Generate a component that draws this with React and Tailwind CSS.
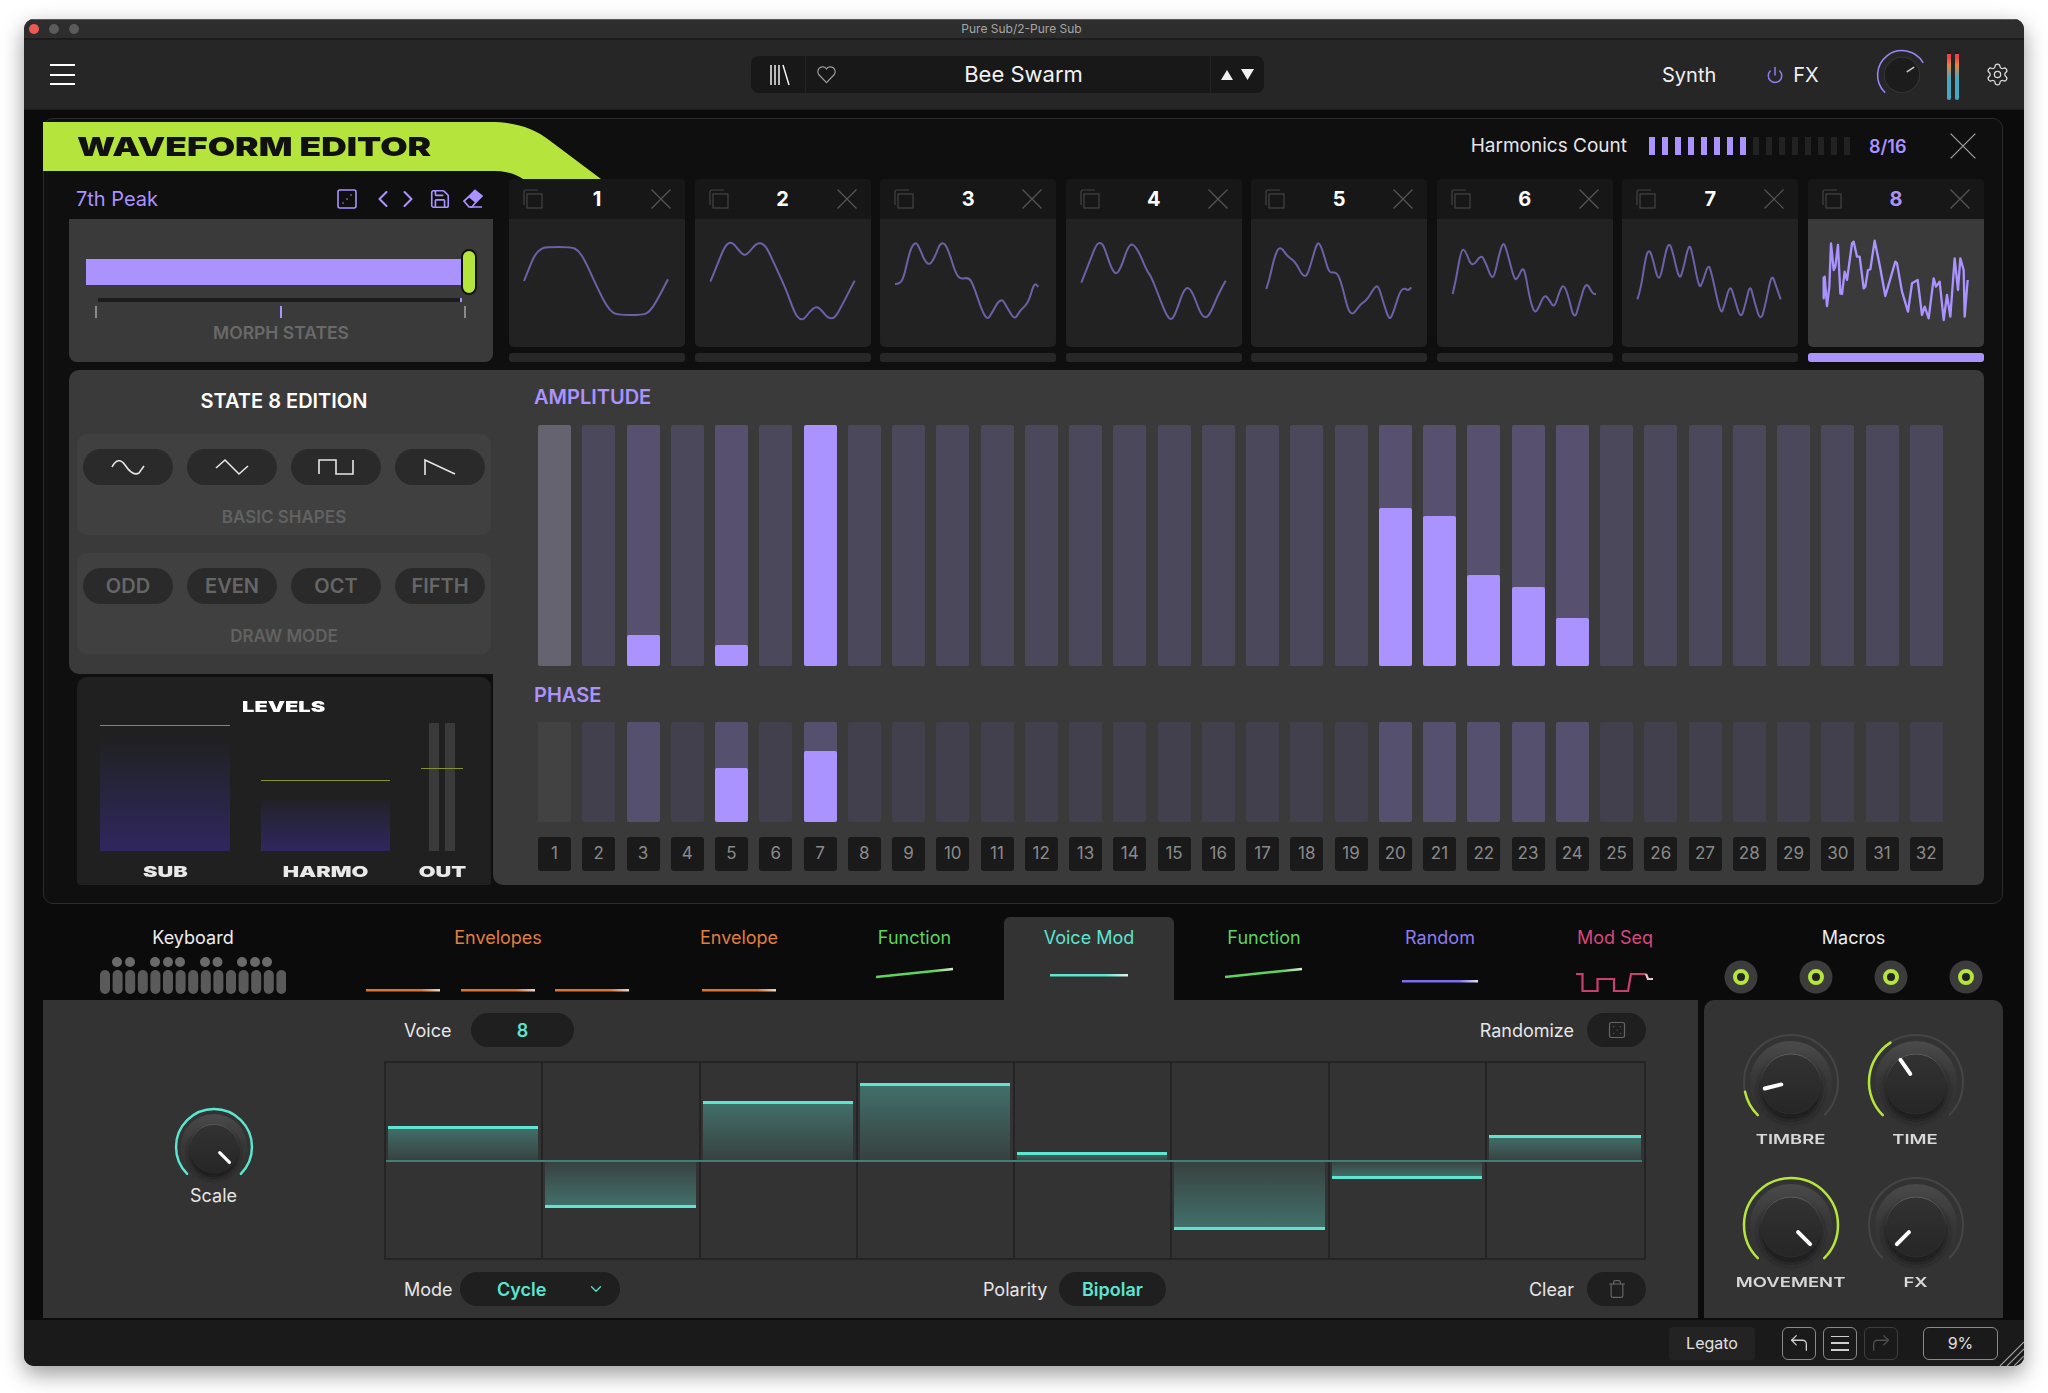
import React from "react";
import {
  ChevronLeft,
  ChevronRight,
  ChevronDown,
  CornerUpLeft,
  CornerUpRight,
  Dice3,
  Dice5,
  Power,
  Save,
  Settings,
  Trash,
} from "lucide-react";

const slotWaves = [
  { origin: 13, pts: [58,333,75,290,90,255,110,235,125,231,200,231,220,240,240,270,265,325,295,388,315,420,335,435,415,435,435,425,455,395,490,328] },
  { origin: 566, pts: [612,335,635,280,650,240,665,218,680,218,700,245,715,257,730,245,750,220,770,220,785,240,810,295,840,360,865,430,880,448,893,448,910,425,930,408,945,420,965,445,985,445,1005,410,1045,332] },
  { origin: 1125, pts: [1170,342,1185,342,1197,320,1215,240,1230,217,1240,225,1260,275,1275,285,1290,260,1305,220,1320,220,1335,255,1350,305,1365,328,1392,322,1405,345,1430,420,1447,450,1460,430,1488,380,1510,420,1530,450,1545,420,1570,400,1587,338,1600,350] },
  { origin: -1, pts: [45,338,70,275,90,222,105,217,115,235,135,295,150,315,165,290,185,230,200,220,220,250,240,300,255,320,280,385,300,435,315,452,330,425,350,365,365,350,380,370,400,425,415,445,430,435,455,375,478,332] },
  { origin: 557, pts: [603,357,612,330,625,270,638,235,650,235,665,258,690,275,710,315,725,320,740,270,755,218,765,222,780,270,792,310,815,305,830,345,848,420,860,433,870,425,885,403,905,390,930,348,940,350,955,400,972,453,985,425,1005,360,1020,355,1028,362,1038,352] },
  { origin: 1113, pts: [1160,372,1170,330,1185,240,1197,238,1218,295,1245,252,1260,280,1275,322,1285,320,1300,250,1312,215,1322,240,1345,330,1355,325,1370,292,1378,310,1392,390,1405,428,1415,420,1435,372,1450,390,1465,415,1480,365,1492,343,1505,370,1525,453,1540,400,1560,333,1580,372,1590,372] },
  { origin: 424, pts: [470,388,480,360,495,260,505,238,515,260,530,325,540,322,555,245,565,218,575,240,595,328,605,310,625,218,635,250,655,355,665,340,683,280,693,310,720,435,730,410,748,343,760,380,780,450,795,400,808,342,820,390,840,457,855,400,873,310,885,345,900,388] },
  { origin: 983, jagged: true, pts: [1030,320,1030,385,1033,320,1040,408,1047,350,1052,220,1060,300,1065,290,1073,225,1080,370,1085,372,1093,305,1100,330,1115,220,1120,215,1130,260,1138,260,1150,355,1155,350,1163,300,1170,298,1183,212,1198,285,1215,378,1245,275,1250,280,1265,365,1283,425,1295,340,1312,330,1325,435,1333,410,1345,445,1360,325,1367,350,1378,335,1390,450,1400,375,1410,440,1423,265,1433,360,1440,265,1450,300,1453,440,1462,330] },
];

const ampFill = { 3: 31, 5: 21, 7: 241, 20: 158, 21: 150, 22: 91, 23: 79, 24: 48 };
const phaseFill = { 5: 54, 7: 71 };
const activeBars = [3, 5, 7, 20, 21, 22, 23, 24];
const bars = Array.from({ length: 32 }, (_, i) => i + 1);
const voiceSteps = [34, -45, 59, 77, 8, -67, -16, 25];

const wavePath = (wave) => {
  const p = [];
  for (let i = 0; i < wave.pts.length; i += 2) {
    p.push([wave.pts[i] - wave.origin, wave.pts[i + 1] - 147]);
  }
  if (wave.jagged) return "M" + p.map((q) => q.join(" ")).join("L");
  let d = `M${p[0][0]} ${p[0][1]}`;
  for (let i = 1; i < p.length - 1; i++) {
    const mx = (p[i][0] + p[i + 1][0]) / 2;
    const my = (p[i][1] + p[i + 1][1]) / 2;
    d += `Q${p[i][0]} ${p[i][1]} ${mx} ${my}`;
  }
  const last = p[p.length - 1];
  return d + `L${last[0]} ${last[1]}`;
};

const polar = (r, deg) => {
  const rad = ((deg - 90) * Math.PI) / 180;
  return [r * Math.cos(rad), r * Math.sin(rad)];
};

const arc = (r, from, to) => {
  const [x1, y1] = polar(r, from);
  const [x2, y2] = polar(r, to);
  const large = to - from > 180 ? 1 : 0;
  return `M${x1} ${y1}A${r} ${r} 0 ${large} 1 ${x2} ${y2}`;
};

const Knob = ({ size = 104, angle, to, color = "#b5e53c", dark = false, arcWidth = 2.5 }) => {
  const [x1, y1] = polar(dark ? 12 : 10, angle);
  const [x2, y2] = polar(27, angle);
  return (
    <svg width={size} height={size} viewBox="-52 -52 104 104" className="shrink-0">
      <defs>
        <linearGradient id="skirt" x1="0" y1="0" x2="0" y2="1">
          <stop offset="0" stopColor="#4a4a4a" />
          <stop offset="0.45" stopColor="#383838" />
          <stop offset="1" stopColor="#333333" stopOpacity="0" />
        </linearGradient>
        <linearGradient id="cap" x1="0" y1="0" x2="0" y2="1">
          <stop offset="0" stopColor="#323232" />
          <stop offset="1" stopColor="#262626" />
        </linearGradient>
        <linearGradient id="capEdge" x1="0" y1="0" x2="0" y2="1">
          <stop offset="0" stopColor="#5e5e5e" />
          <stop offset="0.5" stopColor="#2c2c2c" />
        </linearGradient>
        <filter id="blur" x="-30%" y="-30%" width="160%" height="160%">
          <feGaussianBlur stdDeviation="3" />
        </filter>
      </defs>
      {!dark && <path d={arc(47, -135, 135)} fill="none" stroke="#454545" strokeWidth="2" />}
      {!dark && <circle r="41" fill="url(#skirt)" />}
      {!dark && <circle cy="8" r="31" fill="#1b1b1b" filter="url(#blur)" />}
      {dark ? (
        <circle r="34" fill="#1c1c1c" stroke="#353535" strokeWidth="2" />
      ) : (
        <circle cy="2" r="30" fill="url(#cap)" stroke="url(#capEdge)" strokeWidth="1" />
      )}
      {to !== undefined && (
        <path d={arc(47, -135, to)} fill="none" stroke={color} strokeWidth={arcWidth} strokeLinecap="round" />
      )}
      <line x1={x1} y1={y1} x2={x2} y2={y2} stroke={dark ? "#c8c8c8" : "#ffffff"} strokeWidth={dark ? 3 : 4} strokeLinecap="round" />
    </svg>
  );
};

const CopyIcon = () => (
  <svg width="20" height="20" viewBox="0 0 20 20" fill="none" stroke="#444" strokeWidth="1.2" className="shrink-0">
    <path d="M1 16V3a2 2 0 0 1 2-2h12" />
    <rect x="4" y="5" width="15" height="14" />
  </svg>
);

const CrossIcon = ({ size = 20, color = "#555" }) => (
  <svg width={size} height={size} viewBox="0 0 20 20" fill="none" stroke={color} strokeWidth={size > 20 ? 1 : 1.2} className="shrink-0">
    <path d="M0.5 0.5 19.5 19.5M19.5 0.5 0.5 19.5" />
  </svg>
);

const Shape = ({ d }) => (
  <svg width="36" height="20" viewBox="0 0 36 20" fill="none" stroke="#e6e6e6" strokeWidth="1.6">
    <path d={d} />
  </svg>
);

const LineIcon = ({ width, children }) => (
  <svg width={width} height="51" viewBox={`0 0 ${width} 51`} fill="none">
    <defs>
      <linearGradient id="fadeOrange" x1="0" y1="0" x2="1" y2="0">
        <stop offset="0.75" stopColor="#dd7436" />
        <stop offset="1" stopColor="#e6d8cc" />
      </linearGradient>
      <linearGradient id="fadeGreen" gradientUnits="userSpaceOnUse" x1="0" y1="0" x2="78" y2="0">
        <stop offset="0.75" stopColor="#5ed45e" />
        <stop offset="1" stopColor="#e4f0e0" />
      </linearGradient>
      <linearGradient id="fadeTeal" gradientUnits="userSpaceOnUse" x1="0" y1="0" x2="78" y2="0">
        <stop offset="0.7" stopColor="#5ce5d0" />
        <stop offset="1" stopColor="#dff3ef" />
      </linearGradient>
      <linearGradient id="fadePurple" gradientUnits="userSpaceOnUse" x1="0" y1="0" x2="76" y2="0">
        <stop offset="0.75" stopColor="#7c6ee8" />
        <stop offset="1" stopColor="#e5e0f5" />
      </linearGradient>
    </defs>
    {children}
  </svg>
);

const EnvLine = ({ x = 0, w = 74 }) => <rect x={x} y="40" width={w} height="2.5" fill="url(#fadeOrange)" />;

const ModTab = ({ label, color, className = "", children }) => (
  <div className={`flex flex-col items-center pt-[8px] ${className}`}>
    <div className={`h-[24px] text-[18px] leading-[26px] ${color}`}>{label}</div>
    {children}
  </div>
);

const HeavyLabel = ({ children, className = "" }) => (
  <span className={`inline-block font-black text-[15px] leading-[16px] text-[#e8e8e8] scale-x-[1.45] ${className}`}>{children}</span>
);

const GroupBox = ({ label, children }) => (
  <div className="ml-[8px] mr-[2px] h-[101px] rounded-[10px] bg-[#404040] px-[6px] pt-[15px] flex flex-col items-center">
    <div className="grid grid-cols-4 gap-x-[14px] w-full">{children}</div>
    <div className="mt-[22px] text-[17px] leading-[20px] font-semibold text-[#626262]">{label}</div>
  </div>
);

const PillBtn = ({ children }) => (
  <div className="h-[36px] rounded-full bg-[#2a2a2a] flex items-center justify-center text-[20px] font-semibold text-[#666]">{children}</div>
);

const MacroKnob = ({ label, angle, to }) => (
  <div className="h-[143px] flex flex-col items-center">
    <Knob angle={angle} to={to} />
    <div className="h-[12px] -mt-[1px] text-[13px] leading-[12px] font-semibold text-[#d8d8d8] scale-x-[1.42]">{label}</div>
  </div>
);

const FootBtn = ({ children, dim }) => (
  <div className={`w-[34px] h-[33px] rounded-[6px] border flex items-center justify-center ${dim ? "border-[#3e3e3e] text-[#4f4f4f]" : "border-[#8a8a8a] text-[#cfcfcf]"}`}>
    {children}
  </div>
);

export default function App() {
  return (
    <div className="w-[2048px] h-[1393px] bg-white pt-[19px] pl-[24px] overflow-hidden [font-family:Inter,sans-serif]">
      <div className="w-[2000px] h-[1347px] rounded-[10px] overflow-hidden flex flex-col bg-[#0b0b0b] shadow-[0_8px_22px_rgba(0,0,0,0.4)] text-[#ededed] relative">
        {/* title bar */}
        <div className="h-[21px] shrink-0 bg-[#2d2d2d] border-t border-[#5a5a5a] border-b-[2px] border-b-[#1c1c1c] flex items-center relative">
          <div className="flex gap-[10px] pl-[5px]">
            <div className="w-[10px] h-[10px] rounded-full bg-[#ee5a52]" />
            <div className="w-[10px] h-[10px] rounded-full bg-[#5b5b5b]" />
            <div className="w-[10px] h-[10px] rounded-full bg-[#5b5b5b]" />
          </div>
          <div className="flex-1 text-center text-[12px] text-[#a5a5a5] pr-[60px]">Pure Sub/2-Pure Sub</div>
        </div>

        {/* header */}
        <div className="h-[70px] shrink-0 bg-[#262626] border-b border-[#1c1c1c] flex items-center pl-[26px]">
          <div className="w-[25px] h-[21px] flex flex-col justify-between">
            <div className="h-[2px] bg-white" />
            <div className="h-[2px] bg-white" />
            <div className="h-[2px] bg-white" />
          </div>
          <div className="ml-[676px] w-[513px] h-[37px] rounded-[8px] bg-[#181818] flex items-center">
            <div className="w-[55px] h-full border-r border-[#222] flex items-center justify-center pl-[4px]">
              <svg width="22" height="22" viewBox="0 0 22 22" fill="none" stroke="#f0f0f0" strokeWidth="1.5">
                <path d="M2 1v20M6 1v20M10 1v20M14 1l6 20" />
              </svg>
            </div>
            <svg width="21" height="19" viewBox="0 0 24 22" fill="none" stroke="#9a9a9a" strokeWidth="1.4" className="ml-[10px]">
              <path d="M12 20.5 3 11a5.5 5.5 0 0 1 9-6.5A5.5 5.5 0 0 1 21 11z" />
            </svg>
            <div className="flex-1 text-center text-[22px] leading-[39px] text-[#f2f2f2]">Bee Swarm</div>
            <div className="w-[54px] h-full border-l border-[#222] flex items-center justify-center gap-[8px]">
              <svg width="12" height="10" viewBox="0 0 12 10" fill="#f0f0f0"><path d="M6 0 12 10H0z" /></svg>
              <svg width="13" height="11" viewBox="0 0 12 10" fill="#f0f0f0"><path d="M0 0H12L6 10z" /></svg>
            </div>
          </div>
          <div className="ml-[398px] text-[20px] text-[#efefef]">Synth</div>
          <Power size={18} strokeWidth={2} className="ml-[50px] text-[#8d7cf0]" />
          <div className="ml-[9px] text-[20px] text-[#efefef]">FX</div>
          <div className="ml-[56px] w-[54px] flex justify-center">
            <Knob size={54} dark angle={57} to={59} color="#9a86f5" arcWidth={3} />
          </div>
          <div className="ml-[18px] flex gap-[4px]">
            <div className="w-[4px] h-[50px] rounded-full bg-[linear-gradient(to_bottom,#1f1f2a_0%,#1f1f2a_8%,#ef4444_9%,#ef4444_15%,#e0863c_30%,#47a8c4_58%,#47a8c4_100%)]" />
            <div className="w-[4px] h-[50px] rounded-full bg-[linear-gradient(to_bottom,#1f1f2a_0%,#1f1f2a_8%,#ef4444_9%,#ef4444_15%,#e0863c_30%,#47a8c4_58%,#47a8c4_100%)]" />
          </div>
          <Settings size={25} strokeWidth={1.2} className="ml-[26px] text-[#dcdcdc]" />
        </div>

        {/* body */}
        <div className="flex-1 flex flex-col">
          {/* waveform editor */}
          <div className="relative ml-[19px] mt-[8px] w-[1960px] h-[786px] rounded-[10px] border border-[#2c2c2c] bg-[#0f0f0f] pl-[25px] pr-[18px]">
            <div className="absolute left-[-1px] top-[3px]">
              <svg width="560" height="58" viewBox="0 0 560 58" className="block">
                <path d="M0 0H447C470 0 490 5 506 18L558 57H480C470 50 460 49 447 49H0Z" fill="#b5e53c" />
              </svg>
              <div className="absolute left-[34px] top-[11px] text-[26px] leading-[28px] font-black text-[#111] whitespace-nowrap origin-left scale-x-[1.36]">WAVEFORM EDITOR</div>
            </div>

            <div className="h-[60px] flex items-center justify-end pb-[6px] pr-[8px]">
              <div className="text-[19px] text-[#e6e6e6]">Harmonics Count</div>
              <div className="ml-[22px] flex gap-[7px]">
                {Array.from({ length: 16 }, (_, i) => (
                  <div key={i} className={`w-[6px] h-[18px] ${i < 8 ? "bg-[#aa92ff]" : "bg-[#222222]"}`} />
                ))}
              </div>
              <div className="ml-[19px] w-[42px] text-[18px] font-semibold text-[#aa92ff]">8/16</div>
              <div className="ml-[39px]"><CrossIcon size={26} color="#9a9a9a" /></div>
            </div>

            {/* morph + slots */}
            <div className="flex h-[183px]">
              <div className="w-[424px] shrink-0 flex flex-col">
                <div className="h-[40px] flex items-center pl-[7px] text-[#aa92ff]">
                  <div className="text-[20px]">7th Peak</div>
                  <Dice3 size={24} strokeWidth={1.6} className="ml-[177px]" />
                  <ChevronLeft size={28} strokeWidth={1.8} className="ml-[10px]" />
                  <ChevronRight size={28} strokeWidth={1.8} className="ml-[-3px]" />
                  <Save size={22} strokeWidth={1.8} className="ml-[7px]" />
                  <svg width="21" height="20" viewBox="0 0 21 20" className="ml-[11px]" fill="none" stroke="#aa92ff" strokeWidth="1.7">
                    <path d="M8 18H20" />
                    <path d="M13 1.5 20 7l-6 6-7-5.500z" fill="#aa92ff" />
                    <path d="M7 7.500 2 12l5 6h3l4-5" />
                  </svg>
                </div>
                <div className="relative h-[143px] rounded-b-[8px] bg-[#3a3a3a]">
                  <div className="pt-[30px] pl-[17px] flex items-center">
                    <div className="w-[375px] h-[26px] bg-[#aa92ff]" />
                    <div className="w-[16px] h-[46px] rounded-full bg-[#b5e53c] border-[2px] border-[#111]" />
                  </div>
                  <div className="ml-[29px] mt-[3px] w-[364px] h-[4px] bg-[#1c1c1c] flex justify-end">
                    <div className="w-[2px] h-full bg-[#aa92ff]" />
                  </div>
                  <div className="ml-[26px] mt-[4px] w-[371px] flex justify-between">
                    <div className="w-[2px] h-[12px] bg-[#8a8a8a]" />
                    <div className="w-[2px] h-[12px] bg-[#aa92ff]" />
                    <div className="w-[2px] h-[12px] bg-[#8a8a8a]" />
                  </div>
                  <div className="mt-[4px] text-center text-[17.5px] leading-[22px] font-semibold text-[#696969]">MORPH STATES</div>
                </div>
              </div>
              <div className="ml-[16px] flex-1 grid grid-cols-8 gap-x-[9.4px]">
                {slotWaves.map((wave, i) => {
                  const active = i === 7;
                  return (
                    <div key={i} className="flex flex-col">
                      <div className="h-[40px] rounded-t-[4px] bg-[#171717] flex items-center justify-between px-[14px]">
                        <CopyIcon />
                        <div className={`text-[20px] font-bold ${active ? "text-[#aa92ff]" : "text-white"}`}>{i + 1}</div>
                        <CrossIcon />
                      </div>
                      <div className={`h-[128px] rounded-b-[5px] ${active ? "bg-[#3a3a3a]" : "bg-[#222222]"}`}>
                        <svg width="176" height="128" viewBox="0 0 528 384" fill="none" className="block">
                          <path d={wavePath(wave)} stroke={active ? "#aa92ff" : "#6c60a6"} strokeWidth={active ? 7 : 6} strokeLinejoin="round" />
                        </svg>
                      </div>
                      <div className={`mt-[6px] h-[9px] rounded-[3px] ${active ? "bg-[#aa92ff]" : "bg-[#272727]"}`} />
                    </div>
                  );
                })}
              </div>
            </div>

            {/* state editor */}
            <div className="mt-[8px] flex h-[515px]">
              <div className="w-[424px] shrink-0 flex flex-col">
                <div className="h-[304px] bg-[#3a3a3a] rounded-tl-[10px] rounded-bl-[10px]">
                  <div className="h-[64px] pt-[19px] pl-[6px] text-center text-[20px] leading-[24px] font-semibold text-white">STATE 8 EDITION</div>
                  <GroupBox label="BASIC SHAPES">
                    <PillBtn><Shape d="M2 10C6 2 11 2 15 8S24 19 29 16L34 9" /></PillBtn>
                    <PillBtn><Shape d="M2 11 11 3 25 17 34 9" /></PillBtn>
                    <PillBtn><Shape d="M1 17V3H18V17H35V3" /></PillBtn>
                    <PillBtn><Shape d="M3 18V3L33 17" /></PillBtn>
                  </GroupBox>
                  <div className="h-[18px]" />
                  <GroupBox label="DRAW MODE">
                    <PillBtn>ODD</PillBtn>
                    <PillBtn>EVEN</PillBtn>
                    <PillBtn>OCT</PillBtn>
                    <PillBtn>FIFTH</PillBtn>
                  </GroupBox>
                </div>
                <div className="ml-[8px] mt-[3px] w-[414px] h-[208px] rounded-t-[10px] rounded-b-[4px] bg-[#202020]">
                  <div className="h-[46px] pt-[21px] text-center leading-[16px]"><HeavyLabel className="text-white">LEVELS</HeavyLabel></div>
                  <div className="flex pl-[23px] gap-[31px]">
                    <div className="w-[130px] h-[128px] relative flex flex-col justify-end">
                      <div className="absolute top-[2px] left-0 right-0 h-[1px] bg-[#84922f]" />
                      <div className="h-[116px] bg-gradient-to-b from-[#202020] to-[#30265f]" />
                    </div>
                    <div className="w-[129px] h-[128px] relative flex flex-col justify-end">
                      <div className="absolute top-[57px] left-0 right-0 h-[1px] bg-[#84922f]" />
                      <div className="h-[51px] bg-gradient-to-b from-[#222128] to-[#30265f]" />
                    </div>
                    <div className="w-[42px] h-[128px] relative flex justify-center gap-[6px]">
                      <div className="w-[10px] bg-[#3a3a3a]" />
                      <div className="w-[10px] bg-[#3a3a3a]" />
                      <div className="absolute top-[45px] left-0 right-0 h-[1px] bg-[#84922f]" />
                    </div>
                  </div>
                  <div className="flex pl-[23px] gap-[31px] mt-[12px] leading-[16px]">
                    <div className="w-[130px] text-center"><HeavyLabel>SUB</HeavyLabel></div>
                    <div className="w-[129px] text-center"><HeavyLabel>HARMO</HeavyLabel></div>
                    <div className="w-[42px] text-center"><HeavyLabel>OUT</HeavyLabel></div>
                  </div>
                </div>
              </div>

              <div className="flex-1 h-full bg-[#3a3a3a] rounded-r-[8px] rounded-bl-[10px] pl-[45px]">
                <div className="pt-[15px] -ml-[4px] text-[20px] leading-[24px] font-semibold text-[#aa92ff]">AMPLITUDE</div>
                <div className="mt-[16px] grid grid-cols-[repeat(32,33px)] gap-x-[11.25px] h-[241px]">
                  {bars.map((n) => {
                    const bg = n === 1 ? "bg-[#65636f]" : activeBars.includes(n) ? "bg-[#57506f]" : "bg-[#4c485c]";
                    return (
                      <div key={n} className={`relative rounded-[2px] ${bg}`}>
                        {ampFill[n] && <div className="absolute bottom-0 inset-x-0 rounded-[2px] bg-[#aa92ff]" style={{ height: ampFill[n] }} />}
                      </div>
                    );
                  })}
                </div>
                <div className="mt-[17px] -ml-[4px] text-[20px] leading-[24px] font-semibold text-[#aa92ff]">PHASE</div>
                <div className="mt-[15px] grid grid-cols-[repeat(32,33px)] gap-x-[11.25px] h-[100px]">
                  {bars.map((n) => {
                    const bg = n === 1 ? "bg-[#424242]" : activeBars.includes(n) ? "bg-[#56506f]" : "bg-[#42404c]";
                    return (
                      <div key={n} className={`relative rounded-[2px] ${bg}`}>
                        {phaseFill[n] && <div className="absolute bottom-0 inset-x-0 rounded-[2px] bg-[#aa92ff]" style={{ height: phaseFill[n] }} />}
                      </div>
                    );
                  })}
                </div>
                <div className="mt-[15px] grid grid-cols-[repeat(32,33px)] gap-x-[11.25px] h-[34px]">
                  {bars.map((n) => (
                    <div key={n} className="rounded-[3px] bg-[#1a1a1a] flex items-center justify-center text-[17px] text-[#8a8a8a]">{n}</div>
                  ))}
                </div>
              </div>
            </div>
          </div>

          {/* modulation tabs */}
          <div className="mt-[13px] h-[83px] shrink-0 flex pl-[19px]">
            <ModTab label="Keyboard" color="text-[#ededed]" className="w-[300px]">
              <svg width="186" height="51" viewBox="0 0 186 51">
                {Array.from({ length: 15 }, (_, i) => (
                  <rect key={i} x={i * 12.6} y="21" width="10" height="24" rx="5" fill="#5a5a5a" />
                ))}
                {[17, 30, 55, 68, 80, 105, 117.5, 142, 155, 167].map((x) => (
                  <circle key={x} cx={x} cy="13" r="5" fill="#6a6a6a" />
                ))}
              </svg>
            </ModTab>
            <ModTab label="Envelopes" color="text-[#e07f3e]" className="w-[310px]">
              <LineIcon width={264}>
                <EnvLine x={0} />
                <EnvLine x={95} />
                <EnvLine x={189} />
              </LineIcon>
            </ModTab>
            <ModTab label="Envelope" color="text-[#e07f3e]" className="w-[172px]">
              <LineIcon width={74}><EnvLine /></LineIcon>
            </ModTab>
            <ModTab label="Function" color="text-[#5ed45e]" className="w-[179px]">
              <LineIcon width={78}><path d="M0 28 77 20" stroke="url(#fadeGreen)" strokeWidth="2.5" /></LineIcon>
            </ModTab>
            <ModTab label="Voice Mod" color="text-[#5ce5d0]" className="w-[170px] bg-[#333333] rounded-t-[6px]">
              <LineIcon width={78}><rect x="0" y="25" width="78" height="2.5" fill="url(#fadeTeal)" /></LineIcon>
            </ModTab>
            <ModTab label="Function" color="text-[#5ed45e]" className="w-[180px]">
              <LineIcon width={78}><path d="M0 28 77 20" stroke="url(#fadeGreen)" strokeWidth="2.5" /></LineIcon>
            </ModTab>
            <ModTab label="Random" color="text-[#8d7cf0]" className="w-[172px]">
              <LineIcon width={76}><rect x="0" y="31" width="76" height="2.5" fill="url(#fadePurple)" /></LineIcon>
            </ModTab>
            <ModTab label="Mod Seq" color="text-[#d9487c]" className="w-[178px]">
              <svg width="78" height="51" viewBox="0 0 78 51" fill="none" strokeWidth="2.2">
                <path d="M0 25H6.500V42H21.500V30H38V42H52L55 25H70" stroke="#c94070" />
                <path d="M70 25 72 30H77" stroke="#e9c8d2" />
              </svg>
            </ModTab>
            <ModTab label="Macros" color="text-[#ededed]" className="w-[299px]">
              <svg width="299" height="51" viewBox="0 0 299 51">
                {[37, 112, 187, 262].map((x) => (
                  <g key={x}>
                    <circle cx={x} cy="28" r="16.500" fill="#3c3c3c" />
                    <circle cx={x} cy="28" r="6" fill="#222" stroke="#b5e53c" strokeWidth="4" />
                  </g>
                ))}
              </svg>
            </ModTab>
          </div>

          {/* voice mod + macros */}
          <div className="h-[318px] shrink-0 flex pl-[19px]">
            <div className="w-[1655px] bg-[#333333] flex">
              <div className="w-[341px] shrink-0 flex flex-col items-center pt-[105px]">
                <Knob size={84} angle={135} to={135} color="#5ce5d0" arcWidth={3} />
                <div className="-mt-[5px] h-[24px] text-[18px] leading-[24px] text-[#e6e6e6]">Scale</div>
              </div>
              <div className="w-[1262px] pt-[13px]">
                <div className="h-[34px] pl-[20px] flex items-center justify-between">
                  <div className="flex items-center">
                    <div className="w-[67px] text-[18px] text-[#e6e6e6]">Voice</div>
                    <div className="w-[103px] h-[34px] rounded-full bg-[#1f1f1f] flex items-center justify-center text-[18px] font-semibold text-[#5ce5d0]">8</div>
                  </div>
                  <div className="flex items-center">
                    <div className="text-[18px] text-[#e6e6e6]">Randomize</div>
                    <div className="ml-[13px] w-[59px] h-[34px] rounded-full bg-[#1f1f1f] flex items-center justify-center">
                      <Dice5 size={20} strokeWidth={1.4} className="text-[#666]" />
                    </div>
                  </div>
                </div>
                <div className="relative mt-[14px] h-[199px] grid grid-cols-8 border-[2px] border-[#242424]">
                  {voiceSteps.map((v, i) => (
                    <div key={i} className={`relative ${i < 7 ? "border-r-[2px] border-[#242424]" : ""}`}>
                      <div
                        className={`absolute left-[2px] right-[3px] ${v > 0 ? "bg-gradient-to-b" : "bg-gradient-to-t"} from-[#41706b] to-[#37413f]`}
                        style={{ top: v > 0 ? 98 - v : 98, height: Math.abs(v) }}
                      />
                      <div className="absolute left-[2px] right-[3px] h-[3px] bg-[#5ce5d0]" style={{ top: 97 - v }} />
                    </div>
                  ))}
                  <div className="absolute left-0 right-[2px] top-[97px] h-[2px] bg-[#3f7f78]" />
                </div>
                <div className="mt-[12px] h-[34px] pl-[20px] flex items-center justify-between">
                  <div className="flex items-center">
                    <div className="w-[56px] text-[18px] text-[#e6e6e6]">Mode</div>
                    <div className="w-[160px] h-[34px] rounded-full bg-[#1f1f1f] flex items-center relative">
                      <div className="pl-[37px] text-[18px] font-semibold text-[#5ce5d0]">Cycle</div>
                      <ChevronDown size={18} strokeWidth={1.6} className="absolute right-[15px] text-[#5ce5d0]" />
                    </div>
                  </div>
                  <div className="flex items-center">
                    <div className="w-[76px] text-[18px] text-[#e6e6e6]">Polarity</div>
                    <div className="w-[107px] h-[34px] rounded-full bg-[#1f1f1f] flex items-center justify-center text-[18px] font-semibold text-[#5ce5d0]">Bipolar</div>
                  </div>
                  <div className="flex items-center">
                    <div className="text-[18px] text-[#e6e6e6]">Clear</div>
                    <div className="ml-[13px] w-[59px] h-[34px] rounded-full bg-[#1f1f1f] flex items-center justify-center">
                      <Trash size={20} strokeWidth={1.4} className="text-[#666]" />
                    </div>
                  </div>
                </div>
              </div>
            </div>
            <div className="ml-[6px] w-[299px] bg-[#333333] rounded-t-[10px] pt-[30px] pl-[24px]">
              <div className="grid grid-cols-[125px_125px]">
                <MacroKnob label="TIMBRE" angle={-104} to={-102} />
                <MacroKnob label="TIME" angle={-35} to={-33} />
                <MacroKnob label="MOVEMENT" angle={135} to={135} />
                <MacroKnob label="FX" angle={-135} />
              </div>
            </div>
          </div>

          {/* status bar */}
          <div className="relative mt-[2px] flex-1 bg-[#1a1a1a] flex items-center justify-end pr-[26px]">
            <div className="w-[86px] h-[33px] rounded-[4px] bg-[#232323] flex items-center justify-center text-[16px] text-[#e0e0e0]">Legato</div>
            <div className="ml-[27px] flex gap-[7px]">
              <FootBtn><CornerUpLeft size={22} strokeWidth={1.4} /></FootBtn>
              <FootBtn>
                <div className="w-[18px] h-[15px] flex flex-col justify-between">
                  <div className="h-[1.5px] bg-[#cfcfcf]" />
                  <div className="h-[1.5px] bg-[#cfcfcf]" />
                  <div className="h-[1.5px] bg-[#cfcfcf]" />
                </div>
              </FootBtn>
              <FootBtn dim><CornerUpRight size={22} strokeWidth={1.4} /></FootBtn>
            </div>
            <div className="ml-[25px] w-[75px] h-[33px] rounded-[6px] border border-[#8a8a8a] flex items-center justify-center text-[16px] text-[#e0e0e0]">9%</div>
            <svg width="26" height="26" viewBox="0 0 26 26" fill="none" stroke="#9a9a9a" strokeWidth="1.2" className="absolute right-0 bottom-0">
              <path d="M2 26 26 2M9 26 26 9M16 26 26 16" />
            </svg>
          </div>
        </div>
      </div>
    </div>
  );
}
